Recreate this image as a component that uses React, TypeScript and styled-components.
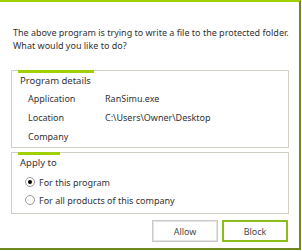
import * as React from 'react';
import styled, { createGlobalStyle } from 'styled-components';

const palette = {
  lime: '#9fd000',
  olive: '#6e8a1e',
  frame: '#cfcfc4',
  text: '#333333',
  button: '#c9c9c9',
  buttonText: '#4a4a4a',
};

const GlobalStyle = createGlobalStyle`
  html, body {
    margin: 0;
    padding: 0;
    background: #ffffff;
  }
  body {
    font-family: 'Noto Sans', 'Open Sans', sans-serif;
    color: ${palette.text};
  }
`;

type Detail = { label: string; value: string };

const details: Detail[] = [
  { label: 'Application', value: 'RanSimu.exe' },
  { label: 'Location', value: 'C:\\Users\\Owner\\Desktop' },
  { label: 'Company', value: '' },
];

const options = ['For this program', 'For all products of this company'];

const App: React.FC = () => {
  const [choice, setChoice] = React.useState(0);
  return (
    <>
      <GlobalStyle />
      <Dialog>
        <Message>
          The above program is trying to write a file to the protected folder.
          <br />
          What would you like to do?
        </Message>
        <Panel>
          <Title>Program details</Title>
          {details.map(d => (
            <DetailRow key={d.label}>
              <span>{d.label}</span>
              <span>{d.value}</span>
            </DetailRow>
          ))}
        </Panel>
        <Panel second>
          <Title>Apply to</Title>
          {options.map((o, i) => (
            <RadioRow key={o} onClick={() => setChoice(i)}>
              <Radio checked={choice === i} />
              {o}
            </RadioRow>
          ))}
        </Panel>
        <Buttons>
          <Button>Allow</Button>
          <Button primary>Block</Button>
        </Buttons>
      </Dialog>
    </>
  );
};

const Dialog = styled.div`
  box-sizing: border-box;
  width: 301px;
  height: 250px;
  border-top: 2px solid ${palette.lime};
  border-right: 2px solid ${palette.olive};
  border-bottom: 2px solid ${palette.olive};
  display: flex;
  flex-direction: column;
  background: #ffffff;
`;

const Message = styled.p`
  margin: 24px 0 0 13px;
  font-size: 9px;
  line-height: 13px;
`;

const Panel = styled.div<{ second?: boolean }>`
  box-sizing: border-box;
  width: 278px;
  margin: ${p => (p.second ? '4px' : '18px')} 0 0 11px;
  height: ${p => (p.second ? '62px' : '78px')};
  border: 1px solid ${palette.frame};
  display: flex;
  flex-direction: column;
  align-items: flex-start;
`;

const Title = styled.div`
  margin-top: -1px;
  margin-left: 6px;
  padding: 0 3px 0 2px;
  border-top: 3px solid ${palette.lime};
  font-size: 9.5px;
  line-height: 16px;
`;

const DetailRow = styled.div`
  display: grid;
  grid-template-columns: 77px 1fr;
  padding-left: 16px;
  font-size: 9px;
  line-height: 19px;
  &:first-of-type {
    margin-top: 1px;
  }
`;

const RadioRow = styled.label`
  display: flex;
  align-items: center;
  gap: 4px;
  padding-left: 13px;
  font-size: 9px;
  height: 18px;
  cursor: pointer;
  &:first-of-type {
    margin-top: 2px;
  }
`;

const Radio = styled.span<{ checked: boolean }>`
  box-sizing: border-box;
  width: 10px;
  height: 10px;
  border-radius: 50%;
  border: 1px solid #999999;
  background: #ffffff;
  display: flex;
  align-items: center;
  justify-content: center;
  &::after {
    content: '';
    width: 4px;
    height: 4px;
    border-radius: 50%;
    background: ${p => (p.checked ? '#000000' : 'transparent')};
  }
`;

const Buttons = styled.div`
  display: flex;
  justify-content: flex-end;
  gap: 4px;
  margin: 6px 11px 0 0;
`;

const Button = styled.button<{ primary?: boolean }>`
  box-sizing: border-box;
  width: 66px;
  height: 22px;
  background: #ffffff;
  border: 1px solid ${p => (p.primary ? '#8cbd18' : palette.button)};
  box-shadow: inset 0 0 0 1px ${p => (p.primary ? '#8cbd18' : '#e4e4e4')};
  color: ${palette.buttonText};
  font-family: inherit;
  font-size: 9px;
  padding: 0;
  cursor: pointer;
`;

export default App;
